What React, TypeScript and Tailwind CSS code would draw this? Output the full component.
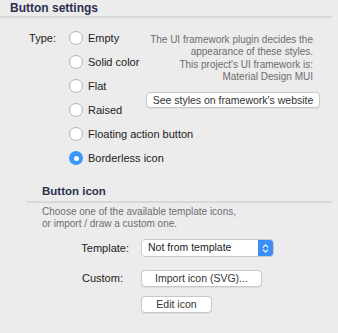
import { ChevronsUpDown } from 'lucide-react'

const options = ['Empty', 'Solid color', 'Flat', 'Raised', 'Floating action button', 'Borderless icon']
const selected = 'Borderless icon'

function Radio({ label, checked }: { label: string; checked: boolean }) {
  return (
    <div className="flex items-center h-6 gap-[5px] whitespace-nowrap">
      {checked ? (
        <span className="shrink-0 w-[14px] h-[14px] rounded-full bg-[#3a98fb] flex items-center justify-center">
          <span className="w-[5px] h-[5px] rounded-full bg-white" />
        </span>
      ) : (
        <span className="shrink-0 w-[14px] h-[14px] rounded-full bg-white border border-[#b4b4b4]" />
      )}
      <span className="text-[11px] text-[#222]">{label}</span>
    </div>
  )
}

function MacButton({ children, className = '' }: { children: React.ReactNode; className?: string }) {
  return (
    <button
      type="button"
      className={`flex items-center justify-center whitespace-nowrap rounded-[4px] bg-white border border-[#c8c8c8] shadow-[0_1px_0_rgba(0,0,0,0.06)] text-[10.5px] text-[#333] ${className}`}
    >
      {children}
    </button>
  )
}

export default function App() {
  return (
    <div
      className="w-[338px] h-[333px] bg-[#ececec] overflow-hidden"
      style={{ fontFamily: '"Liberation Sans", Arial, sans-serif' }}
    >
      <div className="h-[16px] pl-[10px] flex items-center text-[12px] font-bold text-[#2d3050] leading-none">
        Button settings
      </div>
      <div className="w-[332px] h-[2px] bg-[#d8d8d8]" />

      <div className="flex mt-[8px] pr-[25px]">
        <div className="shrink-0 w-[56px] h-6 flex items-center justify-end text-[11px] text-[#222]">Type:</div>
        <div className="ml-[13px] flex flex-col flex-1 min-w-0">
          {options.map((o) => (
            <Radio key={o} label={o} checked={o === selected} />
          ))}
        </div>
        <div className="shrink-0 flex flex-col items-end mt-[8px] text-[10px] leading-[12px] text-[#6e6e6e] text-right">
          <div className="whitespace-nowrap">The UI framework plugin decides the</div>
          <div className="whitespace-nowrap">appearance of these styles.</div>
          <div className="whitespace-nowrap mt-[1px]">This project's UI framework is:</div>
          <div className="whitespace-nowrap">Material Design MUI</div>
          <MacButton className="mt-[9px] mr-[-7px] w-[174px] h-[16px]">See styles on framework's website</MacButton>
        </div>
      </div>

      <div className="pl-[42px] mt-[16px] h-[12px] flex items-center text-[11.5px] font-bold text-[#2d3050] leading-none">
        Button icon
      </div>
      <div className="ml-[27px] mt-[3px] w-[305px] h-[2px] bg-[#d8d8d8]" />
      <div className="pl-[42px] mt-[3px] text-[10px] leading-[12px] text-[#6e6e6e]">
        <div>Choose one of the available template icons,</div>
        <div>or import / draw a custom one.</div>
      </div>

      <div className="flex items-center mt-[9px] h-[18px]">
        <div className="w-[129px] text-right text-[11px] text-[#222]">Template:</div>
        <div className="ml-[12px] w-[133px] h-[18px] flex rounded-[4px] bg-white border border-[#c8c8c8] overflow-hidden">
          <span className="flex-1 pl-[6px] flex items-center text-[10.5px] text-[#222]">Not from template</span>
          <span className="w-[15px] bg-[#3a8ff8] flex items-center justify-center">
            <ChevronsUpDown className="w-[11px] h-[11px] text-white" strokeWidth={2.5} />
          </span>
        </div>
      </div>

      <div className="flex items-center mt-[13px] h-[17px]">
        <div className="w-[82px]" />
        <div className="text-[11px] text-[#222]">Custom:</div>
        <MacButton className="ml-[18px] w-[121px] h-[17px]">Import icon (SVG)...</MacButton>
      </div>

      <div className="flex mt-[9px] pl-[141px]">
        <MacButton className="w-[71px] h-[17px]">Edit icon</MacButton>
      </div>
    </div>
  )
}
